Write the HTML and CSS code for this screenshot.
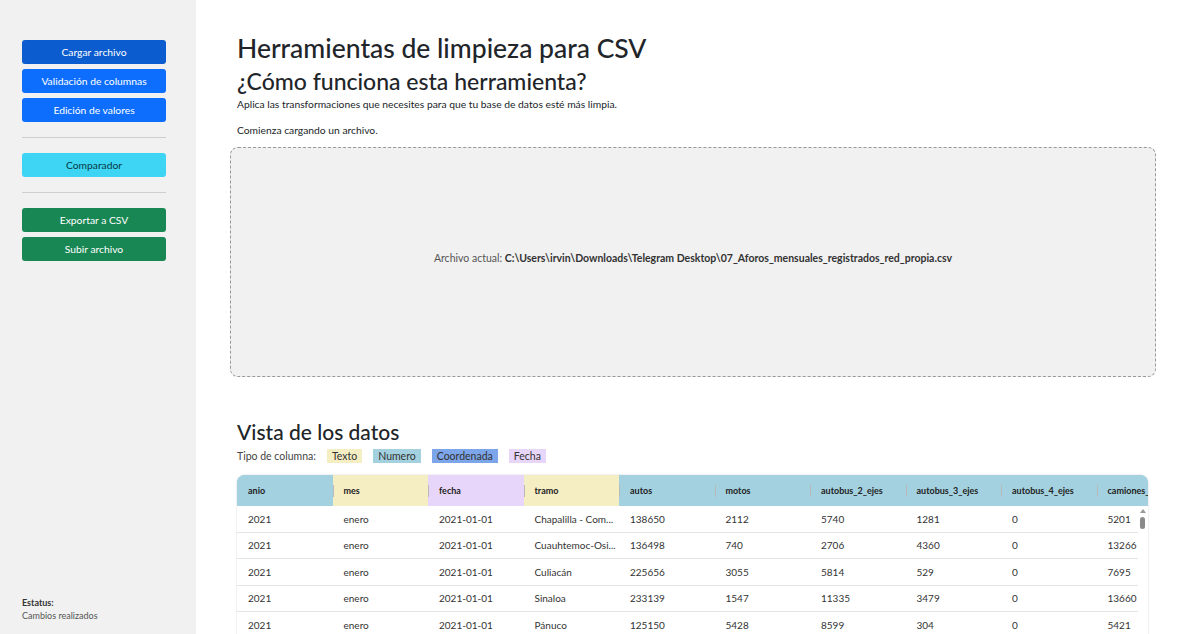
FILE: index.html
```html
<!DOCTYPE html>
<html>

<head>
    <title>Herramientas de limpieza para CSV</title>
    <meta name='viewport' content='width=device-width'>
    <link rel="stylesheet" href="styles.css">
</head>

<body>
    <div class='layout'>
        <aside class='sidebar'>
            <div class='group'>
                <button class='btn btn-primary active'>Cargar archivo</button>
                <button class='btn btn-primary'>Validación de columnas</button>
                <button class='btn btn-primary'>Edición de valores</button>
            </div>
            <hr>
            <div class='group'>
                <button class='btn btn-info'>Comparador</button>
            </div>
            <hr>
            <div class='group'>
                <button class='btn btn-success'>Exportar a CSV</button>
                <button class='btn btn-success'>Subir archivo</button>
            </div>
            <div class='status'>
                <b>Estatus:</b><br />
                Cambios realizados
            </div>
        </aside>

        <main class='content'>
            <h1>Herramientas de limpieza para CSV</h1>
            <h2>¿Cómo funciona esta herramienta?</h2>
            <p>Aplica las transformaciones que necesites para que tu base de datos esté más limpia.</p>
            <p>Comienza cargando un archivo.</p>

            <div class='dropzone'>
                <span>Archivo actual: <b>C:\Users\irvin\Downloads\Telegram Desktop\07_Aforos_mensuales_registrados_red_propia.csv</b></span>
            </div>

            <h3>Vista de los datos</h3>
            <div class='legend'>
                <span>Tipo de columna:</span>
                <span class='tag texto'>Texto</span>
                <span class='tag numero'>Numero</span>
                <span class='tag coord'>Coordenada</span>
                <span class='tag fecha'>Fecha</span>
            </div>

            <div class='grid'>
                <div class='row head'>
                    <div class='cell numero'>anio</div>
                    <div class='cell texto'>mes</div>
                    <div class='cell fecha'>fecha</div>
                    <div class='cell texto'>tramo</div>
                    <div class='cell numero'>autos</div>
                    <div class='cell numero'>motos</div>
                    <div class='cell numero'>autobus_2_ejes</div>
                    <div class='cell numero'>autobus_3_ejes</div>
                    <div class='cell numero'>autobus_4_ejes</div>
                    <div class='cell numero'>camiones_2_ejes</div>
                </div>
                <div class='body'>
                    <div class='row'>
                        <div class='cell'>2021</div><div class='cell'>enero</div><div class='cell'>2021-01-01</div><div class='cell'>Chapalilla - Com...</div><div class='cell'>138650</div><div class='cell'>2112</div><div class='cell'>5740</div><div class='cell'>1281</div><div class='cell'>0</div><div class='cell'>5201</div>
                    </div>
                    <div class='row'>
                        <div class='cell'>2021</div><div class='cell'>enero</div><div class='cell'>2021-01-01</div><div class='cell'>Cuauhtemoc-Osi...</div><div class='cell'>136498</div><div class='cell'>740</div><div class='cell'>2706</div><div class='cell'>4360</div><div class='cell'>0</div><div class='cell'>13266</div>
                    </div>
                    <div class='row'>
                        <div class='cell'>2021</div><div class='cell'>enero</div><div class='cell'>2021-01-01</div><div class='cell'>Culiacán</div><div class='cell'>225656</div><div class='cell'>3055</div><div class='cell'>5814</div><div class='cell'>529</div><div class='cell'>0</div><div class='cell'>7695</div>
                    </div>
                    <div class='row'>
                        <div class='cell'>2021</div><div class='cell'>enero</div><div class='cell'>2021-01-01</div><div class='cell'>Sinaloa</div><div class='cell'>233139</div><div class='cell'>1547</div><div class='cell'>11335</div><div class='cell'>3479</div><div class='cell'>0</div><div class='cell'>13660</div>
                    </div>
                    <div class='row'>
                        <div class='cell'>2021</div><div class='cell'>enero</div><div class='cell'>2021-01-01</div><div class='cell'>Pánuco</div><div class='cell'>125150</div><div class='cell'>5428</div><div class='cell'>8599</div><div class='cell'>304</div><div class='cell'>0</div><div class='cell'>5421</div>
                    </div>
                    <div class='scrollbar'>
                        <span class='arrow'></span>
                        <span class='thumb'></span>
                    </div>
                </div>
            </div>
        </main>
    </div>
</body>

</html>
```
FILE: styles.css
```css
body {
    font-family: Lato, "Open Sans", sans-serif;
    margin: 0;
    color: #212529;
    background: white;
}
.layout {
    display: flex;
    height: 634px;
    overflow: hidden;
}
.sidebar {
    width: 144px;
    flex: none;
    background: #f1f1f1;
    padding: 40px 30px 12px 22px;
    display: flex;
    flex-direction: column;
}
.group {
    display: flex;
    flex-direction: column;
    gap: 5px;
}
.btn {
    height: 24px;
    border: none;
    border-radius: 3px;
    font-family: inherit;
    font-size: 10.3px;
    color: white;
    padding: 0;
}
.btn-primary {
    background: #0d6efd;
}
.btn-primary.active {
    background: #0b5ccf;
}
.btn-info {
    background: #3dd5f3;
    color: #063945;
}
.btn-success {
    background: #198754;
}
hr {
    border: none;
    border-top: 1px solid #cfcfcf;
    margin: 15px 0;
    width: 100%;
}
.status {
    margin-top: auto;
    font-size: 9px;
    line-height: 13px;
    color: #555;
}
.status b {
    color: #333;
}
.content {
    flex: 1;
    padding: 30px 52px 0 41px;
    min-width: 0;
}
h1 {
    font-size: 26.5px;
    font-weight: 500;
    margin: 0;
    line-height: 36px;
}
h2 {
    font-size: 23px;
    font-weight: 500;
    margin: 0 0 1px;
    line-height: 30px;
}
p {
    font-size: 10.3px;
    margin: 0 0 11px;
    line-height: 15px;
}
.dropzone {
    margin: -2px -8px 0 -7px;
    height: 220px;
    padding-bottom: 8px;
    border: 1px dashed #999;
    border-radius: 8px;
    background: #f1f1f1;
    display: flex;
    align-items: center;
    justify-content: center;
    font-size: 10.5px;
    color: #555;
}
.dropzone b {
    color: #333;
}
h3 {
    font-size: 21px;
    font-weight: 500;
    margin: 42px 0 4px;
    line-height: 26px;
}
.legend {
    display: flex;
    align-items: center;
    gap: 11px;
    font-size: 10.5px;
    color: #444;
    margin-bottom: 12px;
}
.tag {
    padding: 0 5px;
    line-height: 14px;
    color: #333;
}
.texto {
    background: #f5eec3;
}
.numero {
    background: #a3d1df;
}
.coord {
    background: #7ca6e9;
}
.fecha {
    background: #e8d6fa;
}
.grid {
    border-radius: 8px 8px 0 0;
    overflow: hidden;
    box-shadow: 0 0 2px #ccc;
    font-size: 10px;
}
.row {
    display: flex;
    height: 26.5px;
    border-bottom: 1px solid #e4e4e4;
    box-sizing: border-box;
}
.cell {
    width: 95.5px;
    flex: none;
    box-sizing: border-box;
    padding-left: 11px;
    display: flex;
    align-items: center;
    white-space: nowrap;
    overflow: hidden;
    color: #333;
}
.head {
    height: 31px;
    border-bottom: none;
    background: #a3d1df;
}
.head .cell {
    font-size: 9px;
    font-weight: 700;
    color: #222;
    position: relative;
}
.head .cell::before {
    content: '';
    position: absolute;
    left: 0;
    top: 10px;
    height: 12px;
    border-left: 1px solid #b9b9b9;
}
.head .cell:first-child::before {
    display: none;
}
.body {
    position: relative;
}
.scrollbar {
    position: absolute;
    right: 0;
    top: 0;
    width: 10px;
    height: 140px;
    background: white;
}
.arrow {
    position: absolute;
    left: 2px;
    top: 3px;
    border: 3px solid transparent;
    border-bottom: 4px solid #999;
    border-top: none;
}
.thumb {
    position: absolute;
    left: 2px;
    top: 11px;
    width: 5px;
    height: 12px;
    border-radius: 3px;
    background: #8a8a8a;
}
```
